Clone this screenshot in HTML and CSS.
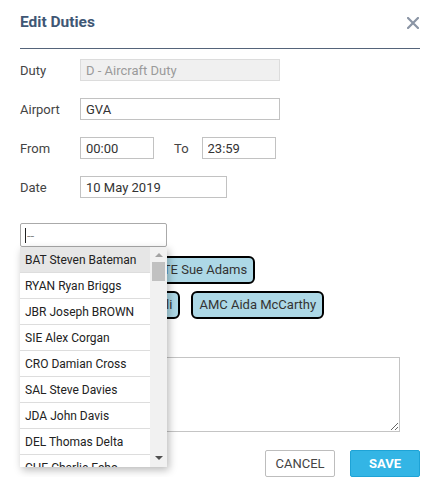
FILE: index.html
```html
<!DOCTYPE html>
<html lang="en">
<head>
  <meta charset="UTF-8">
  <meta name="viewport" content="width=device-width, initial-scale=1.0">
  <title>Edit Duties</title>
  <link rel="stylesheet" href="styles.css">
</head>
<body>
  <div class="dialog">
    <div class="dialog-header">
      <h1>Edit Duties</h1>
      <button class="close" type="button" aria-label="Close">
        <svg width="12" height="12" viewBox="0 0 12 12"><path d="M1 1 L11 11 M11 1 L1 11" stroke="#8b95a5" stroke-width="2.2" stroke-linecap="square"/></svg>
      </button>
    </div>
    <form class="duty-form">
      <div class="row">
        <label>Duty</label>
        <input class="wide" type="text" value="D - Aircraft Duty" disabled>
      </div>
      <div class="row">
        <label>Airport</label>
        <input class="wide" type="text" value="GVA">
      </div>
      <div class="row">
        <label>From</label>
        <input class="time" type="text" value="00:00">
        <label class="to">To</label>
        <input class="time" type="text" value="23:59">
      </div>
      <div class="row">
        <label>Date</label>
        <input class="date" type="text" value="10 May 2019">
      </div>

      <div class="picker">
        <div class="search">
          <span class="caret"></span>
          <input type="text" placeholder="--">
        </div>
        <div class="dropdown">
          <ul class="options">
            <li class="active">BAT Steven Bateman</li>
            <li>RYAN Ryan Briggs</li>
            <li>JBR Joseph BROWN</li>
            <li>SIE Alex Corgan</li>
            <li>CRO Damian Cross</li>
            <li>SAL Steve Davies</li>
            <li>JDA John Davis</li>
            <li>DEL Thomas Delta</li>
            <li>CHE Charlie Echo</li>
          </ul>
          <div class="scrollbar">
            <span class="arrow up"></span>
            <span class="thumb"></span>
            <span class="track"></span>
            <span class="arrow down"></span>
          </div>
        </div>
      </div>

      <div class="chips">
        <span class="chip">SAL Steve Davies</span>
        <span class="chip">STE Sue Adams</span>
        <span class="chip">TRP Francesca De Tripoli</span>
        <span class="chip">AMC Aida McCarthy</span>
      </div>

      <label class="notes-label">Notes</label>
      <textarea class="notes"></textarea>

      <div class="actions">
        <button class="cancel" type="button">CANCEL</button>
        <button class="save" type="submit">SAVE</button>
      </div>
    </form>
  </div>
</body>
</html>
```

FILE: styles.css
```css
body {
  margin: 0;
  font-family: Roboto, "Liberation Sans", Arial, sans-serif;
  font-size: 13px;
  color: #333;
  background: #fff;
}
.dialog {
  width: 400px;
  padding: 0 20px;
}
.dialog-header {
  display: flex;
  justify-content: space-between;
  align-items: flex-start;
  height: 49px;
  box-sizing: border-box;
  padding-top: 12px;
  border-bottom: 1px solid #55647a;
}
.dialog-header h1 {
  margin: 0;
  font-size: 15.5px;
  line-height: 20px;
  font-weight: bold;
  color: #3f5775;
}
.close {
  border: none;
  background: none;
  padding: 0;
  margin-right: 1px;
  margin-top: 5px;
  width: 12px;
  height: 12px;
  display: flex;
}
.duty-form {
  display: flex;
  flex-direction: column;
  padding-top: 10px;
}
.row {
  display: flex;
  align-items: center;
  margin-bottom: 17px;
}
.row label {
  width: 60px;
  color: #444;
}
.row label.to {
  width: auto;
  margin: 0 13px 0 20px;
}
input, textarea, button {
  font-family: inherit;
  font-size: 13px;
  box-sizing: border-box;
}
input {
  height: 22px;
  border: 1px solid #c2c2c2;
  padding: 0 5px;
  color: #333;
  outline: none;
}
input:disabled {
  background: #f0f0f0;
  border-color: #dcdcdc;
  color: #9a9a9a;
}
input.wide {
  width: 200px;
}
input.time {
  width: 74px;
}
input.date {
  width: 147px;
}
.picker {
  position: relative;
  width: 147px;
  margin-top: 8px;
}
.search {
  display: flex;
  align-items: center;
  height: 24px;
  border: 1px solid #aaa;
  border-radius: 2px;
  box-sizing: border-box;
  padding-left: 4px;
}
.search input {
  border: none;
  height: 20px;
  padding: 0 1px;
  width: 120px;
}
.search input::placeholder {
  color: #888;
}
.caret {
  width: 1px;
  height: 15px;
  background: #222;
}
.dropdown {
  position: absolute;
  top: 100%;
  left: 0;
  width: 147px;
  height: 220px;
  display: flex;
  background: #fff;
  box-shadow: 2px 3px 8px rgba(0, 0, 0, 0.28);
  z-index: 2;
}
.options {
  list-style: none;
  margin: 0;
  padding: 0;
  width: 130px;
  overflow: hidden;
}
.options li {
  height: 26px;
  line-height: 26px;
  padding-left: 5px;
  box-sizing: border-box;
  border-bottom: 1px solid #ddd;
  font-size: 12px;
  color: #222;
  white-space: nowrap;
}
.options li.active {
  background: #e6e6e6;
}
.scrollbar {
  width: 17px;
  background: #f1f1f1;
  display: flex;
  flex-direction: column;
  align-items: center;
}
.arrow {
  width: 0;
  height: 0;
  border-left: 4px solid transparent;
  border-right: 4px solid transparent;
}
.arrow.up {
  margin: 6px 0 5px;
  border-bottom: 4px solid #a3a3a3;
}
.arrow.down {
  margin: 5px 0 7px;
  border-top: 4px solid #505050;
}
.thumb {
  width: 13px;
  height: 19px;
  background: #c1c1c1;
}
.track {
  flex: 1;
}
.chips {
  display: flex;
  flex-wrap: wrap;
  gap: 7px 11px;
  margin-top: 9px;
  width: 330px;
}
.chip {
  height: 28px;
  line-height: 24px;
  box-sizing: border-box;
  padding: 0 6px;
  border: 2px solid #000;
  border-radius: 6px;
  background: #add8e6;
  color: #333;
  white-space: nowrap;
}
.notes-label {
  margin-top: 12px;
  height: 16px;
  color: #444;
}
.notes {
  margin-top: 10px;
  width: 380px;
  height: 75px;
  border: 1px solid #c4c4c4;
  outline: none;
}
.actions {
  display: flex;
  justify-content: flex-end;
  gap: 15px;
  margin-top: 18px;
}
.actions button {
  width: 70px;
  height: 27px;
  border-radius: 2px;
  cursor: pointer;
}
.cancel {
  background: #fff;
  border: 1px solid #bdbdbd;
  color: #444;
}
.save {
  background: #33b5e5;
  border: 1px solid #1ea3d6;
  color: #fff;
  font-weight: bold;
}
```
